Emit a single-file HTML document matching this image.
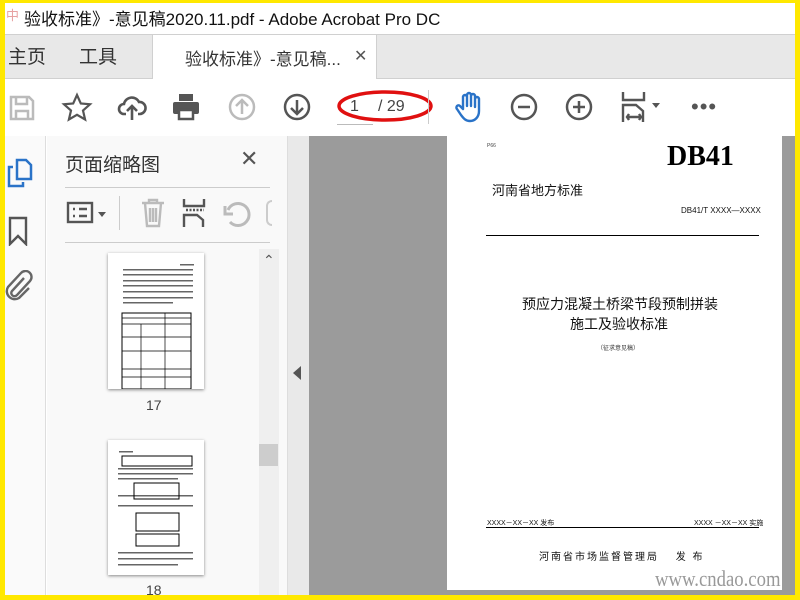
<!DOCTYPE html>
<html><head><meta charset="utf-8"><style>
*{margin:0;padding:0;box-sizing:border-box}
body{width:800px;height:600px;overflow:hidden;background:#ffe800;position:relative;font-family:"Liberation Sans","Noto Sans CJK SC",sans-serif}
.a{position:absolute}
svg{position:absolute}
</style></head><body>
<div class="a" style="left:5px;top:3px;width:790px;height:592px;background:#fff"></div>
<div class="a" style="left:24px;top:5px;font-size:17px;color:#111;white-space:nowrap">验收标准》-意见稿2020.11.pdf - Adobe Acrobat Pro DC</div>
<div class="a" style="left:6px;top:5px;font-size:13px;color:#c33;opacity:.45">中</div>
<div class="a" style="left:5px;top:34px;width:790px;height:45px;background:#e8e8e8;border-top:1px solid #d0d0d0;border-bottom:1px solid #d0d0d0"></div>
<div class="a" style="left:8px;top:42px;font-size:19px;color:#333">主页</div>
<div class="a" style="left:79px;top:42px;font-size:19px;color:#333">工具</div>
<div class="a" style="left:152px;top:35px;width:225px;height:44px;background:#fff;border-left:1px solid #d0d0d0;border-right:1px solid #d0d0d0"></div>
<div class="a" style="left:185px;top:45px;font-size:17px;color:#333">验收标准》-意见稿...</div>
<div class="a" style="left:354px;top:46px;font-size:16px;color:#555">✕</div>
<svg style="left:8px;top:94px" width="28" height="28" viewBox="0 0 28 28" fill="none" stroke="#bbb" stroke-width="2.5"><path d="M3 3h18l4 4v18H3z M8 3v7h11V3 M8 25v-8h12v8"/></svg>
<svg style="left:61px;top:92px" width="32" height="32" viewBox="0 0 32 32" fill="none" stroke="#555" stroke-width="2.2"><path d="M16 3l3.8 8.5 9.2.8-7 6.2 2.1 9L16 22.8 7.9 27.5l2.1-9-7-6.2 9.2-.8z"/></svg>
<svg style="left:117px;top:92px" width="30" height="30" viewBox="0 0 30 30" fill="none" stroke="#555" stroke-width="2.6"><path d="M9 22H7a5 5 0 0 1 0-10 8 8 0 0 1 15-2 6 6 0 0 1 1 12h-2 M15 28V14 M10 19l5-5 5 5"/></svg>
<svg style="left:171px;top:92px" width="30" height="30" viewBox="0 0 30 30"><rect x="8" y="2" width="14" height="7" fill="#555"/><rect x="2" y="10" width="26" height="12" rx="2" fill="#555"/><rect x="8" y="18" width="14" height="9" fill="#fff" stroke="#555" stroke-width="2.5"/></svg>
<svg style="left:228px;top:93px" width="28" height="28" viewBox="0 0 28 28" fill="none" stroke="#bbb" stroke-width="2.5"><circle cx="14" cy="14" r="12"/><path d="M14 21V8 M8 13l6-6 6 6"/></svg>
<svg style="left:283px;top:93px" width="28" height="28" viewBox="0 0 28 28" fill="none" stroke="#555" stroke-width="2.5"><circle cx="14" cy="14" r="12"/><path d="M14 7v13 M8 15l6 6 6-6"/></svg>
<div class="a" style="left:337px;top:124px;width:36px;height:1px;background:#bbb"></div>
<div class="a" style="left:350px;top:98px;font-size:16px;color:#444">1</div>
<div class="a" style="left:378px;top:98px;font-size:16px;color:#444">/ 29</div>
<svg style="left:335px;top:86px" width="100" height="40" viewBox="0 0 100 40"><ellipse cx="50" cy="20" rx="46" ry="14" fill="none" stroke="#e01010" stroke-width="3.5"/></svg>
<div class="a" style="left:428px;top:90px;width:1px;height:34px;background:#ccc"></div>
<svg style="left:454px;top:91px" width="30" height="32" viewBox="0 0 30 32" fill="none" stroke="#2a73c8" stroke-width="2.4" stroke-linejoin="round"><path d="M9 18V6a2 2 0 0 1 4 0v9V4a2 2 0 0 1 4 0v11V5a2 2 0 0 1 4 0v11V8a2 2 0 0 1 4 0v12c0 6-4 10-9 10-4 0-6-2-9-6l-4-6a2 2 0 0 1 3-3z"/></svg>
<svg style="left:510px;top:93px" width="28" height="28" viewBox="0 0 28 28" fill="none" stroke="#555" stroke-width="2.5"><circle cx="14" cy="14" r="12"/><path d="M8 14h12"/></svg>
<svg style="left:565px;top:93px" width="28" height="28" viewBox="0 0 28 28" fill="none" stroke="#555" stroke-width="2.5"><circle cx="14" cy="14" r="12"/><path d="M8 14h12 M14 8v12"/></svg>
<svg style="left:620px;top:91px" width="44" height="32" viewBox="0 0 44 32" fill="none" stroke="#555" stroke-width="2.4"><path d="M3 1v8h21V1 M3 31V14h13l7 6v11 M8 26h12 M9 23l-2 3 2 3 M19 23l2 3-2 3"/><path d="M32 12h8l-4 5z" fill="#555" stroke="none"/></svg>
<div class="a" style="left:691px;top:94px;font-size:22px;color:#555;letter-spacing:1px">•••</div>
<div class="a" style="left:5px;top:136px;width:41px;height:459px;background:#fafafa;border-right:1px solid #ddd"></div>
<svg style="left:7px;top:158px" width="26" height="30" viewBox="0 0 26 30" fill="none" stroke="#2a73c8" stroke-width="2.5"><path d="M10 2h9l5 5v14H10z M6 9H2v19h14v-4"/></svg>
<svg style="left:8px;top:216px" width="20" height="30" viewBox="0 0 20 30" fill="none" stroke="#555" stroke-width="2.4"><path d="M2 2h16v26l-8-8-8 8z"/></svg>
<svg style="left:4px;top:270px" width="30" height="32" viewBox="0 0 30 32" fill="none" stroke="#666" stroke-width="2.4"><path d="M20 8L8 21a3 3 0 0 0 5 4l13-14a6 6 0 0 0-9-8L4 17a8 8 0 0 0 11 11l10-10"/></svg>
<div class="a" style="left:47px;top:136px;width:240px;height:459px;background:#f9f9f9"></div>
<div class="a" style="left:65px;top:150px;font-size:19px;color:#333">页面缩略图</div>
<div class="a" style="left:240px;top:146px;font-size:22px;color:#555">✕</div>
<div class="a" style="left:65px;top:187px;width:205px;height:1px;background:#ccc"></div>
<div class="a" style="left:65px;top:242px;width:205px;height:1px;background:#ccc"></div>
<svg style="left:66px;top:201px" width="44" height="24" viewBox="0 0 44 24" fill="none" stroke="#555" stroke-width="2.4"><rect x="2" y="2" width="24" height="19"/><path d="M7 8h2M13 8h8M7 15h2M13 15h8"/><path d="M32 11h8l-4 5z" fill="#555" stroke="none"/></svg>
<div class="a" style="left:119px;top:196px;width:1px;height:34px;background:#ccc"></div>
<svg style="left:140px;top:198px" width="26" height="30" viewBox="0 0 26 30" fill="none" stroke="#bbb" stroke-width="2.4"><path d="M2 5h22M9 5V2h8v3M5 5l2 23h12l2-23M10 10v14M13 10v14M16 10v14"/></svg>
<svg style="left:182px;top:198px" width="24" height="30" viewBox="0 0 24 30" fill="none" stroke="#555" stroke-width="2.4"><path d="M2 1v7h20V1M2 29V17h13l6 5v7"/><path d="M4 12h18" stroke-dasharray="2 1.5"/></svg>
<svg style="left:222px;top:198px" width="30" height="30" viewBox="0 0 30 30" fill="none" stroke="#bbb" stroke-width="3"><path d="M8 24a11 11 0 1 0-2-12M3 8v8h8"/></svg>
<div class="a" style="left:266px;top:200px;width:6px;height:26px;border:2.5px solid #ccc;border-right:none;border-radius:14px 0 0 14px"></div>
<div class="a" style="left:259px;top:249px;width:20px;height:346px;background:#efefef"></div>
<div class="a" style="left:259px;top:444px;width:19px;height:22px;background:#cdcdcd"></div>
<div class="a" style="left:263px;top:252px;font-size:14px;color:#555">⌃</div>
<div class="a" style="left:108px;top:253px;width:96px;height:136px;background:#fff;box-shadow:0 1px 3px #888"></div>
<svg style="left:108px;top:253px" width="96" height="136" viewBox="0 0 96 136"><g fill="#666"><rect x="72" y="11" width="14" height="1.5"/><rect x="15" y="16" width="70" height="1.5"/><rect x="15" y="21" width="70" height="1.5"/><rect x="15" y="27" width="70" height="1.5"/><rect x="15" y="32" width="70" height="1.5"/><rect x="15" y="38" width="70" height="1.5"/><rect x="15" y="44" width="70" height="1.5"/><rect x="15" y="49" width="50" height="1.5"/></g><rect x="14" y="60" width="69" height="76" fill="none" stroke="#000" stroke-width="1"/><g stroke="#000" stroke-width=".7"><path d="M14 65h69M14 71h69M14 84h69M14 98h69M14 116h69M14 124h69M33 71v65M57 60v76"/></g></svg>
<div class="a" style="left:146px;top:397px;font-size:14px;color:#444">17</div>
<div class="a" style="left:108px;top:440px;width:96px;height:135px;background:#fff;box-shadow:0 1px 3px #888"></div>
<svg style="left:108px;top:440px" width="96" height="135" viewBox="0 0 96 135"><g fill="#666"><rect x="11" y="11" width="14" height="1.5"/><rect x="10" y="28" width="75" height="1.5"/><rect x="10" y="33" width="75" height="1.5"/><rect x="10" y="38" width="60" height="1.5"/><rect x="10" y="55" width="75" height="1.5"/><rect x="10" y="65" width="75" height="1.5"/><rect x="10" y="112" width="75" height="1.5"/><rect x="10" y="118" width="75" height="1.5"/><rect x="10" y="124" width="60" height="1.5"/></g><rect x="14" y="16" width="70" height="10" fill="none" stroke="#000"/><rect x="26" y="43" width="45" height="16" fill="none" stroke="#000"/><rect x="28" y="73" width="43" height="18" fill="#fff" stroke="#000"/><rect x="28" y="94" width="43" height="12" fill="none" stroke="#000"/></svg>
<div class="a" style="left:146px;top:582px;font-size:14px;color:#444">18</div>
<div class="a" style="left:287px;top:136px;width:22px;height:459px;background:#e9e9e9;border-left:1px solid #ddd"></div>
<svg style="left:293px;top:366px" width="10" height="14"><path d="M8 0v14L0 7z" fill="#555"/></svg>
<div class="a" style="left:309px;top:136px;width:486px;height:459px;background:#9b9b9b"></div>
<div class="a" style="left:447px;top:136px;width:335px;height:454px;background:#fff"></div>
<div class="a" style="left:487px;top:143px;font-size:5px;color:#444">P66</div>
<div class="a" style="left:667px;top:141px;font-size:28px;font-weight:bold;font-family:'Liberation Serif',serif;color:#000">DB41</div>
<div class="a" style="left:492px;top:180px;font-size:13px;color:#111">河南省地方标准</div>
<div class="a" style="left:681px;top:206px;font-size:8px;color:#111">DB41/T XXXX—XXXX</div>
<div class="a" style="left:486px;top:235px;width:273px;height:1px;background:#000"></div>
<div class="a" style="left:522px;top:294px;font-size:14px;color:#111">预应力混凝土桥梁节段预制拼装</div>
<div class="a" style="left:570px;top:314px;font-size:14px;color:#111">施工及验收标准</div>
<div class="a" style="left:597px;top:343px;font-size:6px;color:#333">（征求意见稿）</div>
<div class="a" style="left:487px;top:518px;font-size:7px;color:#111">XXXX－XX－XX 发布</div>
<div class="a" style="left:694px;top:518px;font-size:7px;color:#111">XXXX －XX－XX 实施</div>
<div class="a" style="left:486px;top:527px;width:273px;height:1px;background:#000"></div>
<div class="a" style="left:539px;top:548px;font-size:10px;color:#111;letter-spacing:2px">河南省市场监督管理局 　发 布</div>
<div class="a" style="left:655px;top:566px;font-size:22px;font-family:'Liberation Serif',serif;color:#999;transform:scaleX(.85);transform-origin:left">www.cndao.com</div>
</body></html>
